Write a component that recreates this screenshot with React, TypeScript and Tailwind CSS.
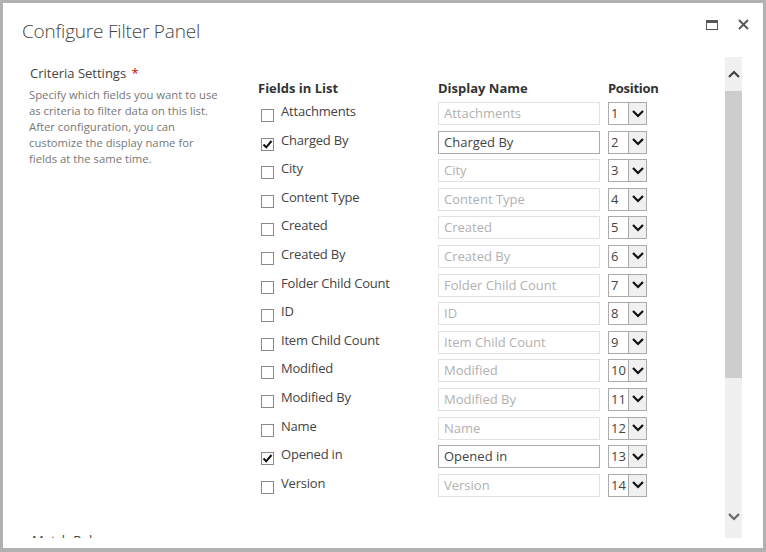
import React from "react";

const rows: { name: string; checked: boolean }[] = [
  { name: "Attachments", checked: false },
  { name: "Charged By", checked: true },
  { name: "City", checked: false },
  { name: "Content Type", checked: false },
  { name: "Created", checked: false },
  { name: "Created By", checked: false },
  { name: "Folder Child Count", checked: false },
  { name: "ID", checked: false },
  { name: "Item Child Count", checked: false },
  { name: "Modified", checked: false },
  { name: "Modified By", checked: false },
  { name: "Name", checked: false },
  { name: "Opened in", checked: true },
  { name: "Version", checked: false },
];

function Chevron({ up = false, className = "" }: { up?: boolean; className?: string }) {
  return (
    <svg width="12" height="8" viewBox="0 0 12 8" className={className}>
      <path
        d={up ? "M1 7 L6 2 L11 7" : "M1 1 L6 6 L11 1"}
        fill="none"
        stroke="currentColor"
        strokeWidth="2.2"
      />
    </svg>
  );
}

function Checkbox({ checked }: { checked: boolean }) {
  return (
    <div className="w-[13px] h-[13px] border border-[#8a8a8a] bg-white flex items-center justify-center shrink-0">
      {checked && (
        <svg width="11" height="11" viewBox="0 0 11 11">
          <path d="M1.5 5.5 L4.2 8.3 L9.5 2" fill="none" stroke="#111" strokeWidth="2" />
        </svg>
      )}
    </div>
  );
}

export default function App() {
  return (
    <div
      className="w-[766px] h-[552px] bg-white border-[3px] border-[#b1b1b1] border-b-[4px] flex flex-col overflow-hidden text-[#444]"
      style={{ fontFamily: '"Open Sans", "Noto Sans", sans-serif' }}
    >
      {/* header */}
      <div className="flex items-start h-[54px] shrink-0">
        <div className="pl-[19px] pt-[14px] text-[19px] font-light text-[#444] tracking-[-0.2px]">
          Configure Filter Panel
        </div>
        <div className="ml-auto flex items-center gap-[20px] pt-[16px] pr-[14px]">
          <div className="w-[12px] h-[10px] border border-[#555] border-t-[3px]" />
          <svg width="11" height="11" viewBox="0 0 11 11">
            <path d="M1 1 L10 10 M10 1 L1 10" stroke="#555" strokeWidth="1.8" />
          </svg>
        </div>
      </div>

      {/* body */}
      <div className="flex h-[481px] shrink-0">
        <div className="flex-1 overflow-hidden relative">
          <div className="flex pt-[7px]">
            {/* left description */}
            <div className="w-[255px] pl-[26px] shrink-0">
              <div className="text-[13px] leading-[18px] pl-[1px]">
                Criteria Settings <span className="text-[#d00] ml-[2px]">*</span>
              </div>
              <div className="mt-[5px] text-[11.3px] leading-[16px] text-[#777] w-[192px]">
                Specify which fields you want to use as criteria to filter data on this list. After
                configuration, you can customize the display name for fields at the same time.
              </div>
            </div>

            {/* table */}
            <div className="pt-[15px]">
              <div className="grid grid-cols-[180px_170px_60px] text-[13px] font-bold text-[#333] h-[20px] items-center">
                <div>Fields in List</div>
                <div>Display Name</div>
                <div className="tracking-[-0.3px]">Position</div>
              </div>
              <div className="grid grid-cols-[180px_170px_60px] auto-rows-[28.6px] mt-[3px]">
                {rows.map((r, i) => (
                  <React.Fragment key={r.name}>
                    <div className="flex items-start pl-[3px]">
                      <div className="pt-[7px]">
                        <Checkbox checked={r.checked} />
                      </div>
                      <div className="ml-[7px] text-[13px] leading-[18px] text-[#444] tracking-[-0.2px]">
                        {r.name}
                      </div>
                    </div>
                    <div>
                      <div
                        className={
                          r.checked
                            ? "w-[162px] h-[23px] border border-[#ababab] px-[5px] text-[13px] leading-[21px] text-[#444] bg-white"
                            : "w-[162px] h-[23px] border border-[#e1e1e1] px-[5px] text-[13px] leading-[21px] text-[#b1b1b1] bg-white"
                        }
                      >
                        {r.name}
                      </div>
                    </div>
                    <div className="flex h-[23px]">
                      <div className="w-[20px] h-[23px] border border-[#ababab] border-r-0 text-[13px] leading-[21px] pl-[2px] text-[#444]">
                        {i + 1}
                      </div>
                      <div className="w-[19px] h-[23px] border border-[#ababab] bg-[#f0f0f0] flex items-center justify-center text-[#111]">
                        <Chevron />
                      </div>
                    </div>
                  </React.Fragment>
                ))}
              </div>
              <div className="h-[30px]" />
            </div>
          </div>
          <div className="pl-[29px] text-[13px] text-[#444] leading-[18px] -mt-[1px]">Match Rules</div>
        </div>

        {/* scrollbar */}
        <div className="w-[17px] bg-[#f0f0f0] mr-[21px] flex flex-col items-center shrink-0">
          <div className="h-[34px] flex items-center justify-center text-[#444]">
            <Chevron up />
          </div>
          <div className="w-full h-[287px] bg-[#cdcdcd]" />
          <div className="flex-1" />
          <div className="h-[42px] flex items-center justify-center text-[#666]">
            <Chevron />
          </div>
        </div>
      </div>
    </div>
  );
}
